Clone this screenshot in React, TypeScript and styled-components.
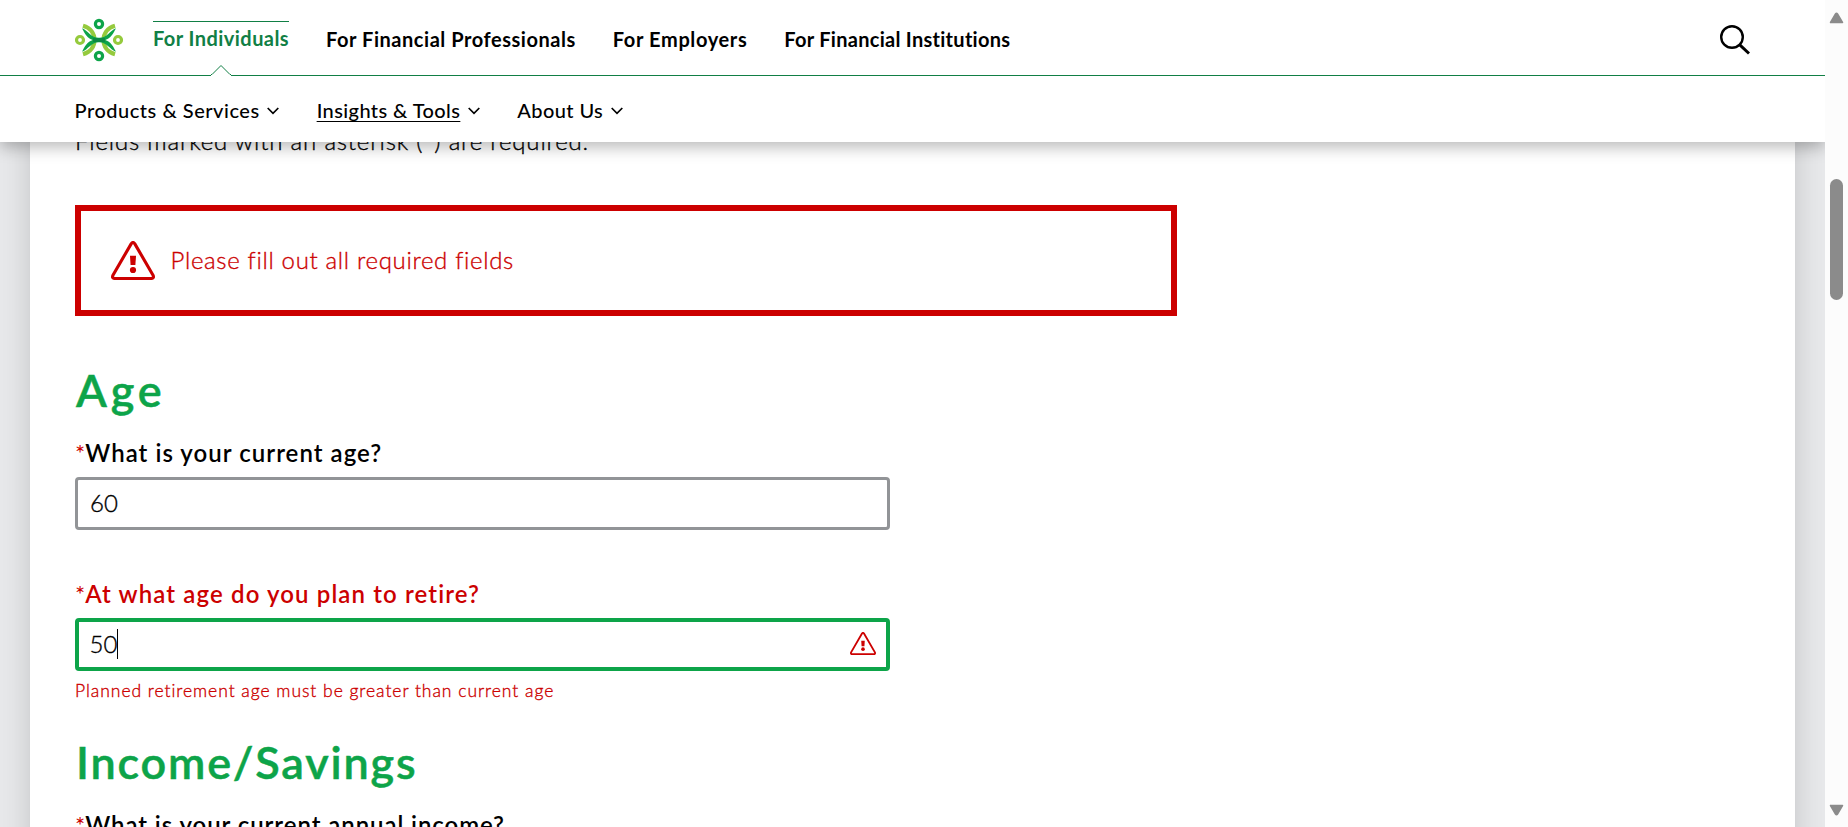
import React from 'react';
import styled, { createGlobalStyle, css } from 'styled-components';

const RED = '#cc0000';
const GREEN = '#0da449';
const DEEP_GREEN = '#117f45';

const GlobalStyle = createGlobalStyle`
  * { box-sizing: border-box; }
  body {
    margin: 0;
    overflow: hidden;
    font-family: Lato, "Open Sans", sans-serif;
    font-variant-ligatures: none;
    color: #000;
    background: #fff;
  }
  h2, p { margin: 0; }
`;

const lightText = css`
  font-weight: 300;
  -webkit-text-stroke: 0.35px currentColor;
`;

const Window = styled.div`
  display: grid;
  grid-template-columns: minmax(0, 1fr) 23px;
  height: 827px;
  overflow: hidden;
`;

const Page = styled.div`
  display: flex;
  flex-direction: column;
  min-width: 0;
  height: 827px;
  overflow: hidden;
  background: #e7e8ea;
`;

const Header = styled.header`
  position: relative;
  z-index: 2;
  flex: none;
  background: #fff;
  box-shadow: 0 5px 15px rgba(0, 0, 0, 0.28);
`;

const PrimaryBar = styled.nav`
  display: flex;
  align-items: center;
  height: 76px;
  padding: 4px 75px 0;
  border-bottom: 1px solid ${DEEP_GREEN};
`;

const PrimaryLinks = styled.div`
  display: flex;
  align-self: flex-start;
  gap: 37px;
  height: 71px;
  margin-left: 30px;
`;

const PrimaryLink = styled.a<{ $spacing: number; $active?: boolean }>`
  position: relative;
  height: ${(p) => (p.$active ? 54 : 34)}px;
  margin-top: ${(p) => (p.$active ? 17 : 18)}px;
  border-top: 1px solid ${(p) => (p.$active ? DEEP_GREEN : 'transparent')};
  font-size: 20px;
  font-weight: 700;
  line-height: 32px;
  letter-spacing: ${(p) => p.$spacing}px;
  white-space: nowrap;
  color: ${(p) => (p.$active ? DEEP_GREEN : '#000')};
`;

const Notch = styled.svg`
  position: absolute;
  left: 50%;
  bottom: -1px;
  margin-left: -10px;
`;

const SearchButton = styled.span`
  display: flex;
  margin-left: auto;
`;

const SecondaryBar = styled.nav`
  display: flex;
  align-items: center;
  gap: 37.5px;
  height: 66px;
  padding: 2px 74.5px 0;
`;

const MenuLink = styled.a`
  display: flex;
  align-items: center;
  gap: 7.5px;
  font-size: 20px;
  font-weight: 500;
  line-height: 30px;
  white-space: nowrap;
`;

const MenuText = styled.span<{ $spacing: number; $current?: boolean }>`
  letter-spacing: ${(p) => p.$spacing}px;
  text-decoration: ${(p) => (p.$current ? 'underline 1px' : 'none')};
  text-underline-offset: 3px;
  text-decoration-skip-ink: none;
`;

const Card = styled.main`
  flex: 1;
  margin: -16px 30px 0;
  padding-left: 45px;
  background: #fff;
  box-shadow: 0 0 27px rgba(0, 0, 0, 0.16);
  white-space: nowrap;
`;

const Intro = styled.p`
  ${lightText}
  font-size: 24px;
  line-height: 30px;
  letter-spacing: 0.82px;
`;

const Alert = styled.div`
  display: flex;
  align-items: center;
  gap: 15.5px;
  width: 1102px;
  height: 111px;
  margin-top: 49px;
  padding-left: 30px;
  border: 6px solid ${RED};
  color: ${RED};
`;

const AlertText = styled.span`
  ${lightText}
  padding-bottom: 2px;
  font-size: 24px;
  line-height: 30px;
  letter-spacing: 0.67px;
`;

const SectionTitle = styled.h2<{ $gap: number; $spacing: number }>`
  margin: ${(p) => p.$gap}px 0 21px 1px;
  font-size: 45px;
  font-weight: 600;
  -webkit-text-stroke: 0.5px currentColor;
  line-height: 54px;
  letter-spacing: ${(p) => p.$spacing}px;
  color: ${GREEN};
`;

const Field = styled.div`
  width: 815px;
  margin-bottom: 49px;
`;

const Label = styled.label<{ $spacing: number; $invalid?: boolean }>`
  display: block;
  margin-bottom: 9px;
  font-size: 24px;
  font-weight: 600;
  line-height: 30px;
  letter-spacing: ${(p) => p.$spacing}px;
  color: ${(p) => (p.$invalid ? RED : '#000')};
`;

const Asterisk = styled.span`
  letter-spacing: 0;
  font-weight: 400;
  color: ${RED};
`;

const InputBox = styled.div<{ $focused?: boolean }>`
  ${lightText}
  display: flex;
  align-items: center;
  height: 53px;
  padding: 0 ${(p) => (p.$focused ? '10px 0 10.5px' : '12px')};
  border: ${(p) => (p.$focused ? `4px solid ${GREEN}` : '3px solid #929497')};
  border-radius: 4px;
  font-size: 24px;
  line-height: 30px;
`;

const Caret = styled.span`
  width: 1px;
  height: 30px;
  margin: 0 auto 0 0;
  background: #000;
`;

const ErrorText = styled.p`
  ${lightText}
  margin-top: 8px;
  font-size: 17.5px;
  line-height: 24px;
  letter-spacing: 0.96px;
  color: ${RED};
`;

const ScrollTrack = styled.div`
  display: flex;
  flex-direction: column;
  align-items: center;
  padding: 12px 0 11px;
  background: #fcfcfc;
`;

const ScrollThumb = styled.div`
  width: 13px;
  height: 121px;
  margin: 155px 0 auto;
  border-radius: 7px;
  background: #8b8b8b;
`;

function Logo() {
  return (
    <svg width="48" height="44" viewBox="-24 -22 48 44" fill="none">
      <g stroke="#95ca3d" strokeWidth="4.200">
        <path d="M-16-14.200C-8-12-4.500-6-4.500 0S-8 12-16 14.200" />
        <path d="M16-14.200C8-12 4.500-6 4.500 0S8 12 16 14.200" />
        <circle cx="-19" cy="0" r="3.500" strokeWidth="3.200" />
        <circle cx="19" cy="0" r="3.500" strokeWidth="3.200" />
      </g>
      <path d="M-17-11.800C-11-9.500-8-2.200 0-2.200S11-9.500 17-11.800C14-6 12-2 6 0C12 2 14 6 17 11.800C11 9.500 8 2.200 0 2.200S-11 9.500-17 11.800C-14 6-12 2-6 0C-12-2-14-6-17-11.800Z" fill={GREEN} />
      <path d="M-6-2H6V2H-6Z" fill="#0b8a44" />
      <circle cx="0" cy="-16" r="3.600" stroke={GREEN} strokeWidth="3.200" />
      <circle cx="0" cy="16" r="3.600" stroke={GREEN} strokeWidth="3.200" />
    </svg>
  );
}

function Warning({ width }: { width: number }) {
  return (
    <svg width={width} height={(width * 39) / 44} viewBox="0 0 44 39">
      <path d="M20.300 2.600 1.800 34.500Q.800 37.400 3.800 37.500H40.200Q43.200 37.400 42.200 34.500L23.700 2.600Q22 .400 20.300 2.600Z" fill="none" stroke={RED} strokeWidth="3.100" strokeLinejoin="round" />
      <path d="M19 14.700H25L24.400 24H19.600Z" fill={RED} />
      <circle cx="22" cy="29" r="3.100" fill={RED} />
    </svg>
  );
}

const ChevronIcon = styled.svg`
  margin-top: 1px;
`;

function Chevron() {
  return (
    <ChevronIcon width="12" height="8" viewBox="0 0 12 8" fill="none" stroke="#000" strokeWidth="1.700">
      <path d="M.700 1 6 6.300 11.300 1" />
    </ChevronIcon>
  );
}

function ScrollArrow({ down }: { down?: boolean }) {
  return (
    <svg width="15" height="12" viewBox="0 0 15 12">
      <path
        d={down ? 'M1.500 1.500H13.500L8.500 10Q7.500 11.500 6.500 10Z' : 'M1.500 10.500H13.500L8.500 2Q7.500.500 6.500 2Z'}
        fill="#8b8b8b"
        stroke="#8b8b8b"
        strokeWidth="1.500"
        strokeLinejoin="round"
      />
    </svg>
  );
}

export default function App() {
  return (
    <Window>
      <GlobalStyle />
      <Page>
        <Header>
          <PrimaryBar>
            <Logo />
            <PrimaryLinks>
              <PrimaryLink $active $spacing={0.44}>
                For Individuals
                <Notch width="20" height="12" viewBox="0 0 20 12">
                  <path d="M0 12V10.500H1L10 1.500 19 10.500H20V12Z" fill="#fff" />
                  <path d="M0 10.500H1L10 1.500 19 10.500H20" fill="none" stroke={DEEP_GREEN} />
                </Notch>
              </PrimaryLink>
              <PrimaryLink $spacing={0.54}>For Financial Professionals</PrimaryLink>
              <PrimaryLink $spacing={0.62}>For Employers</PrimaryLink>
              <PrimaryLink $spacing={0.28}>For Financial Institutions</PrimaryLink>
            </PrimaryLinks>
            <SearchButton>
              <svg width="30" height="30" viewBox="0 0 30 30" fill="none" stroke="#000" strokeWidth="2.400">
                <circle cx="12" cy="12" r="10.800" />
                <path d="M19.800 19.800 29 28.500" strokeWidth="3" />
              </svg>
            </SearchButton>
          </PrimaryBar>
          <SecondaryBar>
            <MenuLink><MenuText $spacing={0.52}>Products &amp; Services</MenuText><Chevron /></MenuLink>
            <MenuLink><MenuText $current $spacing={0.41}>Insights &amp; Tools</MenuText><Chevron /></MenuLink>
            <MenuLink><MenuText $spacing={0.4}>About Us</MenuText><Chevron /></MenuLink>
          </SecondaryBar>
        </Header>
        <Card>
          <Intro>Fields marked with an asterisk (*) are required.</Intro>
          <Alert>
            <Warning width={44} />
            <AlertText>Please fill out all required fields</AlertText>
          </Alert>
          <SectionTitle $gap={46.5} $spacing={3.8}>Age</SectionTitle>
          <Field>
            <Label $spacing={1.04}><Asterisk>*</Asterisk>What is your current age?</Label>
            <InputBox>60</InputBox>
          </Field>
          <Field>
            <Label $invalid $spacing={1.12}><Asterisk>*</Asterisk>At what age do you plan to retire?</Label>
            <InputBox $focused>
              50
              <Caret />
              <Warning width={26} />
            </InputBox>
            <ErrorText>Planned retirement age must be greater than current age</ErrorText>
          </Field>
          <SectionTitle $gap={-17} $spacing={1.8}>Income/Savings</SectionTitle>
          <Field>
            <Label $spacing={0.93}><Asterisk>*</Asterisk>What is your current annual income?</Label>
          </Field>
        </Card>
      </Page>
      <ScrollTrack>
        <ScrollArrow />
        <ScrollThumb />
        <ScrollArrow down />
      </ScrollTrack>
    </Window>
  );
}
